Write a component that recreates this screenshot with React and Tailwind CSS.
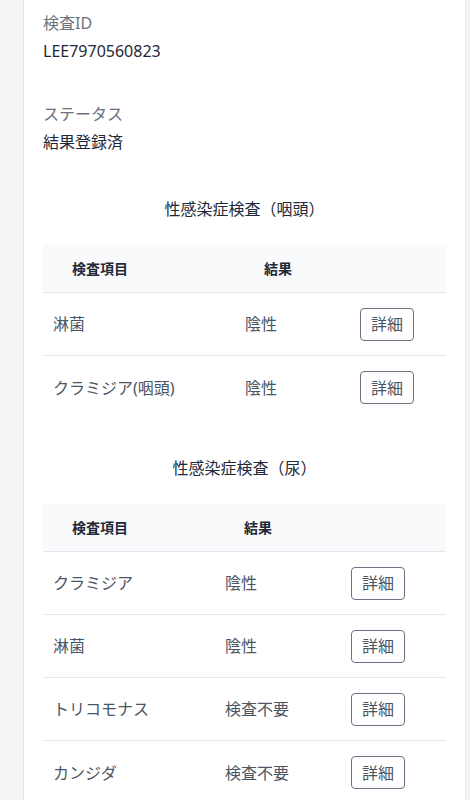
const urethra = [
  { name: "淋菌", result: "陰性" },
  { name: "クラミジア(咽頭)", result: "陰性" },
];

const urine = [
  { name: "クラミジア", result: "陰性" },
  { name: "淋菌", result: "陰性" },
  { name: "トリコモナス", result: "検査不要" },
  { name: "カンジダ", result: "検査不要" },
];

function Field({ label, value }) {
  return (
    <div className="flex flex-col gap-1">
      <span className="text-base leading-6 text-gray-500">{label}</span>
      <span className="text-base leading-6 text-gray-800">{value}</span>
    </div>
  );
}

function ResultTable({ title, rows, cols }) {
  return (
    <section className="flex flex-col">
      <h2 className="mb-6 text-center text-base leading-6 text-gray-800">{title}</h2>
      <div className="flex flex-col">
        <div className={`grid h-12 items-center border-b border-gray-200 bg-gray-50 ${cols}`}>
          <span className="pl-[29px] text-sm font-semibold text-gray-800">検査項目</span>
          <span className="pl-[29px] text-sm font-semibold text-gray-800">結果</span>
          <span />
        </div>
        {rows.map((row, i) => (
          <div
            key={row.name}
            className={`grid h-[63px] items-center ${cols} ${
              i < rows.length - 1 ? "border-b border-gray-200" : ""
            }`}
          >
            <span className="pl-2.5 text-base text-gray-600">{row.name}</span>
            <span className="pl-2.5 text-base text-gray-600">{row.result}</span>
            <div className="pl-2.5">
              <button className="h-[33px] w-[54px] rounded border border-gray-500 text-base text-gray-600">
                詳細
              </button>
            </div>
          </div>
        ))}
      </div>
    </section>
  );
}

export default function App() {
  return (
    <div
      className="min-h-screen bg-gray-100 pl-[23px] pr-1"
      style={{ fontFamily: "'Noto Sans', 'Noto Sans CJK JP', sans-serif" }}
    >
      <div className="flex min-h-screen flex-col border-x border-gray-200 bg-white px-[19px] pt-[11px] pb-10">
        <div className="flex flex-col gap-[39px]">
          <Field label="検査ID" value="LEE7970560823" />
          <Field label="ステータス" value="結果登録済" />
        </div>
        <div className="mt-[43px] flex flex-col gap-[37px]">
          <ResultTable
            title="性感染症検査（咽頭）"
            rows={urethra}
            cols="grid-cols-[192px_115px_1fr]"
          />
          <ResultTable
            title="性感染症検査（尿）"
            rows={urine}
            cols="grid-cols-[172px_126px_1fr]"
          />
        </div>
      </div>
    </div>
  );
}
